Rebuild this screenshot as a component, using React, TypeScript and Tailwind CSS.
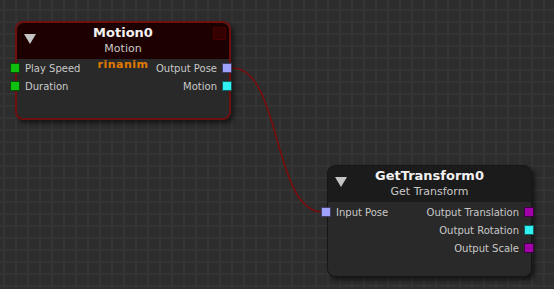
import React from "react";

type Pin = { label: string; color: string };

const font = { fontFamily: '"DejaVu Sans", Verdana, sans-serif' };

const Triangle = () => (
  <svg width="12" height="10" viewBox="0 0 12 10" className="absolute left-[7px] top-[11px]">
    <polygon points="0,0 12,0 6,10" fill="#c4c4c4" />
  </svg>
);

const NodeRow = ({ input, output }: { input?: Pin; output?: Pin }) => (
  <div className="relative flex h-[18px] items-center justify-between pl-[8px] pr-[12px] text-[10px] text-[#c8c8c8]">
    <span>{input?.label}</span>
    <span>{output?.label}</span>
    {input && (
      <div
        className={`absolute left-[-7px] top-1/2 h-[10px] w-[10px] -translate-y-1/2 border border-black/60 ${input.color}`}
      />
    )}
    {output && (
      <div
        className={`absolute right-[-3px] top-1/2 h-[10px] w-[10px] -translate-y-1/2 border border-black/60 ${output.color}`}
      />
    )}
  </div>
);

const GraphNode = ({
  className,
  headerClass,
  bodyClass,
  title,
  subtitle,
  inputs,
  outputs,
  headerExtra,
  children,
}: {
  className: string;
  headerClass: string;
  bodyClass: string;
  title: string;
  subtitle: string;
  inputs: Pin[];
  outputs: Pin[];
  headerExtra?: React.ReactNode;
  children?: React.ReactNode;
}) => {
  const rows = Math.max(inputs.length, outputs.length);
  return (
    <div className={`absolute rounded-[8px] bg-[#292929] shadow-[3px_3px_4px_rgba(0,0,0,0.55)] ${className}`}>
      <div className={`relative flex h-[36px] flex-col items-center rounded-t-[7px] ${headerClass}`}>
        <Triangle />
        <div className="mt-[1px] text-[13px] font-bold leading-[18px] text-[#f2f2f2]">{title}</div>
        <div className="text-[11px] leading-[14px] text-[#c8c8c8]">{subtitle}</div>
        {headerExtra}
      </div>
      <div className={`relative ${bodyClass}`}>
        {Array.from({ length: rows }).map((_, i) => (
          <NodeRow key={i} input={inputs[i]} output={outputs[i]} />
        ))}
        {children}
      </div>
    </div>
  );
};

export default function App() {
  return (
    <div
      style={font}
      className="relative h-[289px] w-[554px] overflow-hidden bg-[#2d2d2d] bg-[linear-gradient(to_right,#343434_2px,transparent_2px),linear-gradient(to_bottom,#343434_2px,transparent_2px)] bg-[length:12px_12px] bg-[position:3px_9px]"
    >
      <svg width="554" height="289" className="absolute left-0 top-0">
        <path d="M 232 68 C 282 68, 272 212, 323 212" fill="none" stroke="#7a0c0c" strokeWidth="1.6" />
      </svg>

      <GraphNode
        className="left-[15px] top-[21px] h-[99px] w-[216px] border-2 border-[#6e1010]"
        headerClass="bg-[#1d0101]"
        bodyClass="pt-0"
        title="Motion0"
        subtitle="Motion"
        headerExtra={
          <div className="absolute right-[3px] top-[4px] h-[13px] w-[13px] rounded-[1px] border border-[#4a0000] bg-[#340000]" />
        }
        inputs={[
          { label: "Play Speed", color: "bg-[#10c010]" },
          { label: "Duration", color: "bg-[#10c010]" },
        ]}
        outputs={[
          { label: "Output Pose", color: "bg-[#a0a0ff]" },
          { label: "Motion", color: "bg-[#30f0f0]" },
        ]}
      >
        <div className="absolute left-0 right-0 top-[-2px] text-center text-[11px] font-bold tracking-[0.5px] text-[#e07a00]">
          rinanim
        </div>
      </GraphNode>

      <GraphNode
        className="left-[327px] top-[165px] h-[112px] w-[205px] border border-[#161616]"
        headerClass="bg-[#1b1b1b]"
        bodyClass="pt-[1px]"
        title="GetTransform0"
        subtitle="Get Transform"
        inputs={[{ label: "Input Pose", color: "bg-[#a0a0ff]" }]}
        outputs={[
          { label: "Output Translation", color: "bg-[#a000a8]" },
          { label: "Output Rotation", color: "bg-[#30f0f0]" },
          { label: "Output Scale", color: "bg-[#a000a8]" },
        ]}
      />
    </div>
  );
}
